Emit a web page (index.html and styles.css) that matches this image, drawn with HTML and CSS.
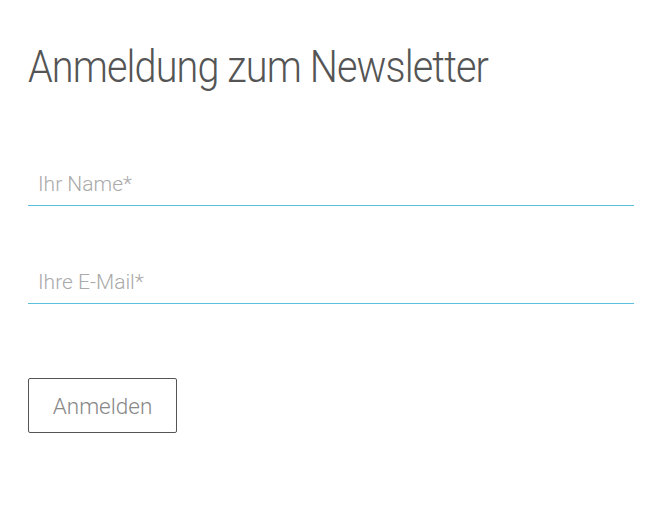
FILE: index.html
```html
<!DOCTYPE html>
<html lang="de">
<head>
<meta charset="utf-8">
<title>Newsletter</title>
<link rel="stylesheet" href="styles.css">
</head>
<body>
<main class="page">
  <h1 class="title">Anmeldung zum Newsletter</h1>
  <form class="form">
    <div class="field"><input class="input" type="text" placeholder="Ihr Name*"></div>
    <div class="field"><input class="input" type="email" placeholder="Ihre E-Mail*"></div>
    <button class="button" type="button">Anmelden</button>
  </form>
</main>
</body>
</html>
```
FILE: styles.css
```css
html, body {
  margin: 0;
  padding: 0;
  background: #fff;
}
.page {
  padding: 40px 30px 0 28px;
  font-family: "Roboto", "Liberation Sans", sans-serif;
}
.title {
  margin: 0;
  font-size: 45px;
  line-height: 53px;
  font-weight: 300;
  color: #555;
  letter-spacing: -1px;
  transform: scaleX(0.88);
  transform-origin: left center;
  white-space: nowrap;
}
.form {
  display: flex;
  flex-direction: column;
  align-items: flex-start;
  margin-top: 59px;
}
.field {
  align-self: stretch;
  margin-bottom: 44px;
}
.input {
  display: block;
  width: 100%;
  box-sizing: border-box;
  height: 54px;
  border: 0;
  border-bottom: 1px solid #5bc0de;
  padding: 10px 10px 0;
  font-family: inherit;
  font-size: 21px;
  font-weight: 300;
  color: #555;
  outline: none;
  background: transparent;
}
.input::placeholder {
  color: #aaa;
}
.button {
  margin-top: 30px;
  width: 149px;
  height: 55px;
  border: 1px solid #555;
  border-radius: 2px;
  background: #fff;
  font-family: inherit;
  font-size: 22.5px;
  font-weight: 300;
  color: #888;
  padding: 0;
}
```
